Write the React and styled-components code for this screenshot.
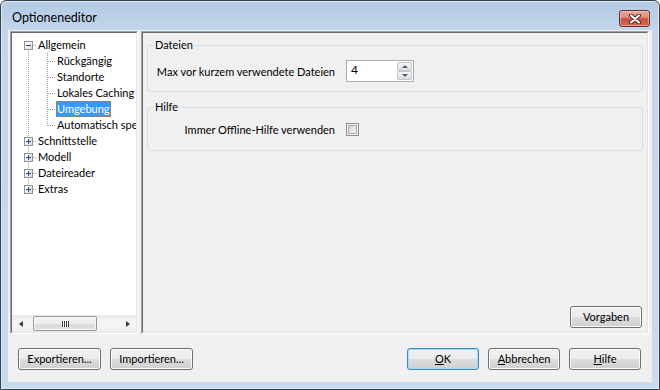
import React from 'react';
import styled, { createGlobalStyle, css } from 'styled-components';

const Global = createGlobalStyle`
  html, body { margin: 0; padding: 0; background: #fff; }
  body { font-family: Lato, "Liberation Sans", sans-serif; font-size: 11px; color: #000; }
  * { box-sizing: border-box; }
`;

const Window = styled.div`
  width: 660px;
  height: 390px;
  display: flex;
  flex-direction: column;
  border: 1px solid #34414f;
  border-radius: 6px 6px 0 0;
  background: linear-gradient(to bottom, #b3cae3 0px, #c2d5eb 29px, #c8dbef 100%);
  box-shadow: inset 1px 1px 0 #dde9f5, inset -1px -1px 0 #dde9f5;
  overflow: hidden;
`;

const TitleBar = styled.div`
  height: 29px;
  flex: none;
  display: flex;
  align-items: flex-start;
  padding: 0 9px 0 11px;
`;

const TitleText = styled.div`
  margin-top: 9px;
  line-height: 16px;
  font-size: 12.5px;
  color: #000;
  flex: 1;
`;

const CloseButton = styled.div`
  margin-top: 9px;
  width: 31px;
  height: 17px;
  border: 1px solid #6b2f2a;
  border-radius: 3px;
  background: linear-gradient(to bottom, #e9aba2 0%, #d9877c 45%, #c5503f 52%, #cf6a5b 100%);
  box-shadow: inset 0 0 0 1px rgba(255, 220, 210, 0.45);
  display: flex;
  align-items: center;
  justify-content: center;
`;

const Client = styled.div`
  flex: 1;
  margin: 0 7px 7px 7px;
  background: #f0f0f0;
  display: flex;
  flex-direction: column;
`;

const MainRow = styled.div`
  display: flex;
  gap: 3px;
  padding: 1px 3px 0 2px;
  height: 305px;
`;

const Well = styled.div`
  width: ${(p) => (p.$width ? `${p.$width}px` : 'auto')};
  flex: ${(p) => (p.$width ? 'none' : '1')};
  height: 303px;
  border: 1px solid;
  border-color: #a0a0a0 #ffffff #ffffff #a0a0a0;
  display: flex;
`;

const WellInner = styled.div`
  flex: 1;
  border: 1px solid;
  border-color: #696969 #e3e3e3 #e3e3e3 #696969;
  background: ${(p) => p.$bg};
  display: flex;
  flex-direction: column;
  padding: ${(p) => p.$pad || '0'};
  min-width: 0;
`;

/* ---------- tree ---------- */

const TreeRows = styled.div`
  flex: 1;
  position: relative;
  overflow: hidden;
  padding-top: 4px;
`;

const Lines = styled.svg`
  position: absolute;
  left: 0;
  top: 0;
  width: 124px;
  height: 200px;
`;

const TreeRow = styled.div`
  position: relative;
  height: 16px;
  display: flex;
  align-items: flex-start;
  white-space: nowrap;
`;

const Expander = styled.span`
  flex: none;
  position: relative;
  margin: 4px 0 0 12px;
  width: 9px;
  height: 9px;
  border: 1px solid #919191;
  background: linear-gradient(135deg, #ffffff 0%, #f2f2f2 50%, #d8d8d8 100%);
  &::before {
    content: '';
    position: absolute;
    left: 1px;
    top: 3px;
    width: 5px;
    height: 1px;
    background: #2e4b7d;
  }
  ${(p) =>
    !p.$open &&
    css`
      &::after {
        content: '';
        position: absolute;
        left: 3px;
        top: 1px;
        width: 1px;
        height: 5px;
        background: #2e4b7d;
      }
    `}
`;

const TreeLabel = styled.span`
  flex: none;
  margin-left: ${(p) => p.$indent}px;
  padding: 0 1px;
  height: 16px;
  line-height: 16px;
  ${(p) =>
    p.$selected &&
    css`
      background: #3399ff;
      color: #fff;
      outline: 1px dotted #c7731e;
      outline-offset: -1px;
    `}
`;

const HScroll = styled.div`
  flex: none;
  height: 17px;
  display: flex;
  background: linear-gradient(to bottom, #e6e6e6 0%, #f4f4f4 30%, #f4f4f4 70%, #ececec 100%);
`;

const ScrollButton = styled.div`
  width: 17px;
  flex: none;
  display: flex;
  align-items: center;
  justify-content: center;
  &::before {
    content: '';
    width: 0;
    height: 0;
    border-top: 3.5px solid transparent;
    border-bottom: 3.5px solid transparent;
    ${(p) =>
      p.$dir === 'left'
        ? css`border-right: 4px solid #3a3a3a;`
        : css`border-left: 4px solid #3a3a3a;`}
  }
`;

const Track = styled.div`
  flex: 1;
  padding: 1px 0 1px 4px;
  display: flex;
`;

const Thumb = styled.div`
  width: 64px;
  border: 1px solid #959595;
  border-radius: 2px;
  background: linear-gradient(to bottom, #f4f4f4 0%, #ececec 50%, #dcdcdc 51%, #dedede 100%);
  box-shadow: inset 0 0 0 1px #fafafa;
  display: flex;
  align-items: center;
  justify-content: center;
  &::before {
    content: '';
    width: 7px;
    height: 6px;
    background: repeating-linear-gradient(to right, #3e3e3e 0 1px, #ffffff 1px 2px);
  }
`;

/* ---------- right panel ---------- */

const Group = styled.fieldset`
  margin: ${(p) => (p.$first ? '0' : '8px 0 0 0')};
  padding: ${(p) => p.$top}px 0 ${(p) => p.$bottom}px 0;
  border: 1px solid #d5dfe5;
  border-radius: 3px;
  min-width: 0;
`;

const Legend = styled.legend`
  margin-left: 5px;
  padding: 0 2px;
  line-height: 14px;
  font-size: 11px;
`;

const FieldRow = styled.div`
  display: grid;
  grid-template-columns: 176px auto;
  column-gap: 11px;
  align-items: center;
  justify-content: start;
  padding-left: 11px;
  height: 22px;
`;

const FieldLabel = styled.span`
  justify-self: end;
  white-space: nowrap;
`;

const Spinner = styled.div`
  width: 68px;
  height: 22px;
  border: 1px solid #abadb3;
  background: #fff;
  display: flex;
  align-items: stretch;
`;

const SpinValue = styled.span`
  flex: 1;
  padding-left: 4px;
  line-height: 18px;
  font-size: 12px;
`;

const SpinButtons = styled.div`
  width: 15px;
  margin: 1px 1px 1px 0;
  display: flex;
  flex-direction: column;
`;

const SpinButton = styled.div`
  flex: 1;
  border: 1px solid #c3c7cd;
  border-radius: 2px;
  background: linear-gradient(to bottom, #f6f6f6 0%, #e8e8e8 50%, #dedede 100%);
  display: flex;
  align-items: center;
  justify-content: center;
  &::before {
    content: '';
    width: 0;
    height: 0;
    border-left: 3px solid transparent;
    border-right: 3px solid transparent;
    ${(p) =>
      p.$dir === 'up'
        ? css`border-bottom: 3px solid #4a5f86;`
        : css`border-top: 3px solid #4a5f86;`}
  }
`;

const Checkbox = styled.span`
  width: 13px;
  height: 13px;
  border: 1px solid #8e8f8f;
  background: #f4f4f4;
  padding: 1px;
  display: flex;
  &::before {
    content: '';
    flex: 1;
    border: 1px solid #a9abaf;
    background: linear-gradient(135deg, #cdd0d5 0%, #e6e7e9 55%, #f7f7f7 100%);
  }
`;

const Spacer = styled.div`
  flex: 1;
`;

const PanelButtons = styled.div`
  display: flex;
  justify-content: flex-end;
  padding-right: 1px;
`;

const Button = styled.button`
  width: ${(p) => p.$w || 72}px;
  height: 22px;
  padding: 0;
  font-family: inherit;
  font-size: 11px;
  color: #000;
  border: 1px solid ${(p) => (p.$default ? '#3c88bf' : '#707070')};
  border-radius: 3px;
  background: linear-gradient(to bottom, #f2f2f2 0%, #ebebeb 48%, #dddddd 52%, #cfcfcf 100%);
  box-shadow: inset 0 0 0 1px ${(p) => (p.$default ? '#a9dcf6' : '#fbfbfb')};
  line-height: 18px;
  u { text-decoration: underline; text-underline-offset: 1px; }
`;

const Footer = styled.div`
  display: flex;
  gap: 9px;
  padding: 13px 11px 0 10px;
`;

const Push = styled.div`
  margin-left: auto;
`;

const tree = [
  { label: 'Allgemein', root: true, open: true },
  { label: 'Rückgängig' },
  { label: 'Standorte' },
  { label: 'Lokales Caching' },
  { label: 'Umgebung', selected: true },
  { label: 'Automatisch speichern' },
  { label: 'Schnittstelle', root: true },
  { label: 'Modell', root: true },
  { label: 'Dateireader', root: true },
  { label: 'Extras', root: true },
];

function TreeLines() {
  const rootCenters = [12, 108, 124, 140, 156];
  const childCenters = [28, 44, 60, 76, 92];
  const s = { stroke: '#a0a0a0', strokeWidth: 1, strokeDasharray: '1 1', shapeRendering: 'crispEdges' };
  return (
    <Lines viewBox="0 0 124 200">
      <line x1="16.5" y1="12" x2="16.5" y2="157" {...s} />
      {rootCenters.map((y) => (
        <line key={'r' + y} x1="17" y1={y + 0.5} x2="25" y2={y + 0.5} {...s} />
      ))}
      <line x1="35.5" y1="20" x2="35.5" y2="93" {...s} />
      {childCenters.map((y) => (
        <line key={'c' + y} x1="36" y1={y + 0.5} x2="44" y2={y + 0.5} {...s} />
      ))}
    </Lines>
  );
}

export default function App() {
  return (
    <>
      <Global />
      <Window>
        <TitleBar>
          <TitleText>Optioneneditor</TitleText>
          <CloseButton>
            <svg width="14" height="10" viewBox="0 0 14 10">
              <path d="M3 1.5 L11 8.5 M11 1.5 L3 8.5" stroke="#5a2420" strokeWidth="4" strokeLinecap="round" fill="none" />
              <path d="M3 1.5 L11 8.5 M11 1.5 L3 8.5" stroke="#ffffff" strokeWidth="2" strokeLinecap="round" fill="none" />
            </svg>
          </CloseButton>
        </TitleBar>
        <Client>
          <MainRow>
            <Well $width={128}>
              <WellInner $bg="#ffffff">
                <TreeRows>
                  <TreeLines />
                  {tree.map((n) => (
                    <TreeRow key={n.label}>
                      {n.root && <Expander $open={n.open} />}
                      <TreeLabel $indent={n.root ? 4 : 44} $selected={n.selected}>
                        {n.label}
                      </TreeLabel>
                    </TreeRow>
                  ))}
                </TreeRows>
                <HScroll>
                  <ScrollButton $dir="left" />
                  <Track>
                    <Thumb />
                  </Track>
                  <ScrollButton $dir="right" />
                </HScroll>
              </WellInner>
            </Well>
            <Well>
              <WellInner $bg="#f0f0f0" $pad="5px 4px 4px 4px">
                <Group $first $top={8} $bottom={9}>
                  <Legend>Dateien</Legend>
                  <FieldRow>
                    <FieldLabel>Max vor kurzem verwendete Dateien</FieldLabel>
                    <Spinner>
                      <SpinValue>4</SpinValue>
                      <SpinButtons>
                        <SpinButton $dir="up" />
                        <SpinButton $dir="down" />
                      </SpinButtons>
                    </Spinner>
                  </FieldRow>
                </Group>
                <Group $top={4} $bottom={10}>
                  <Legend>Hilfe</Legend>
                  <FieldRow>
                    <FieldLabel>Immer Offline-Hilfe verwenden</FieldLabel>
                    <Checkbox />
                  </FieldRow>
                </Group>
                <Spacer />
                <PanelButtons>
                  <Button>Vorgaben</Button>
                </PanelButtons>
              </WellInner>
            </Well>
          </MainRow>
          <Footer>
            <Button $w={83}>Exportieren...</Button>
            <Button $w={83}>Importieren...</Button>
            <Push />
            <Button $default>
              <u>O</u>K
            </Button>
            <Button>
              <u>A</u>bbrechen
            </Button>
            <Button>
              <u>H</u>ilfe
            </Button>
          </Footer>
        </Client>
      </Window>
    </>
  );
}
